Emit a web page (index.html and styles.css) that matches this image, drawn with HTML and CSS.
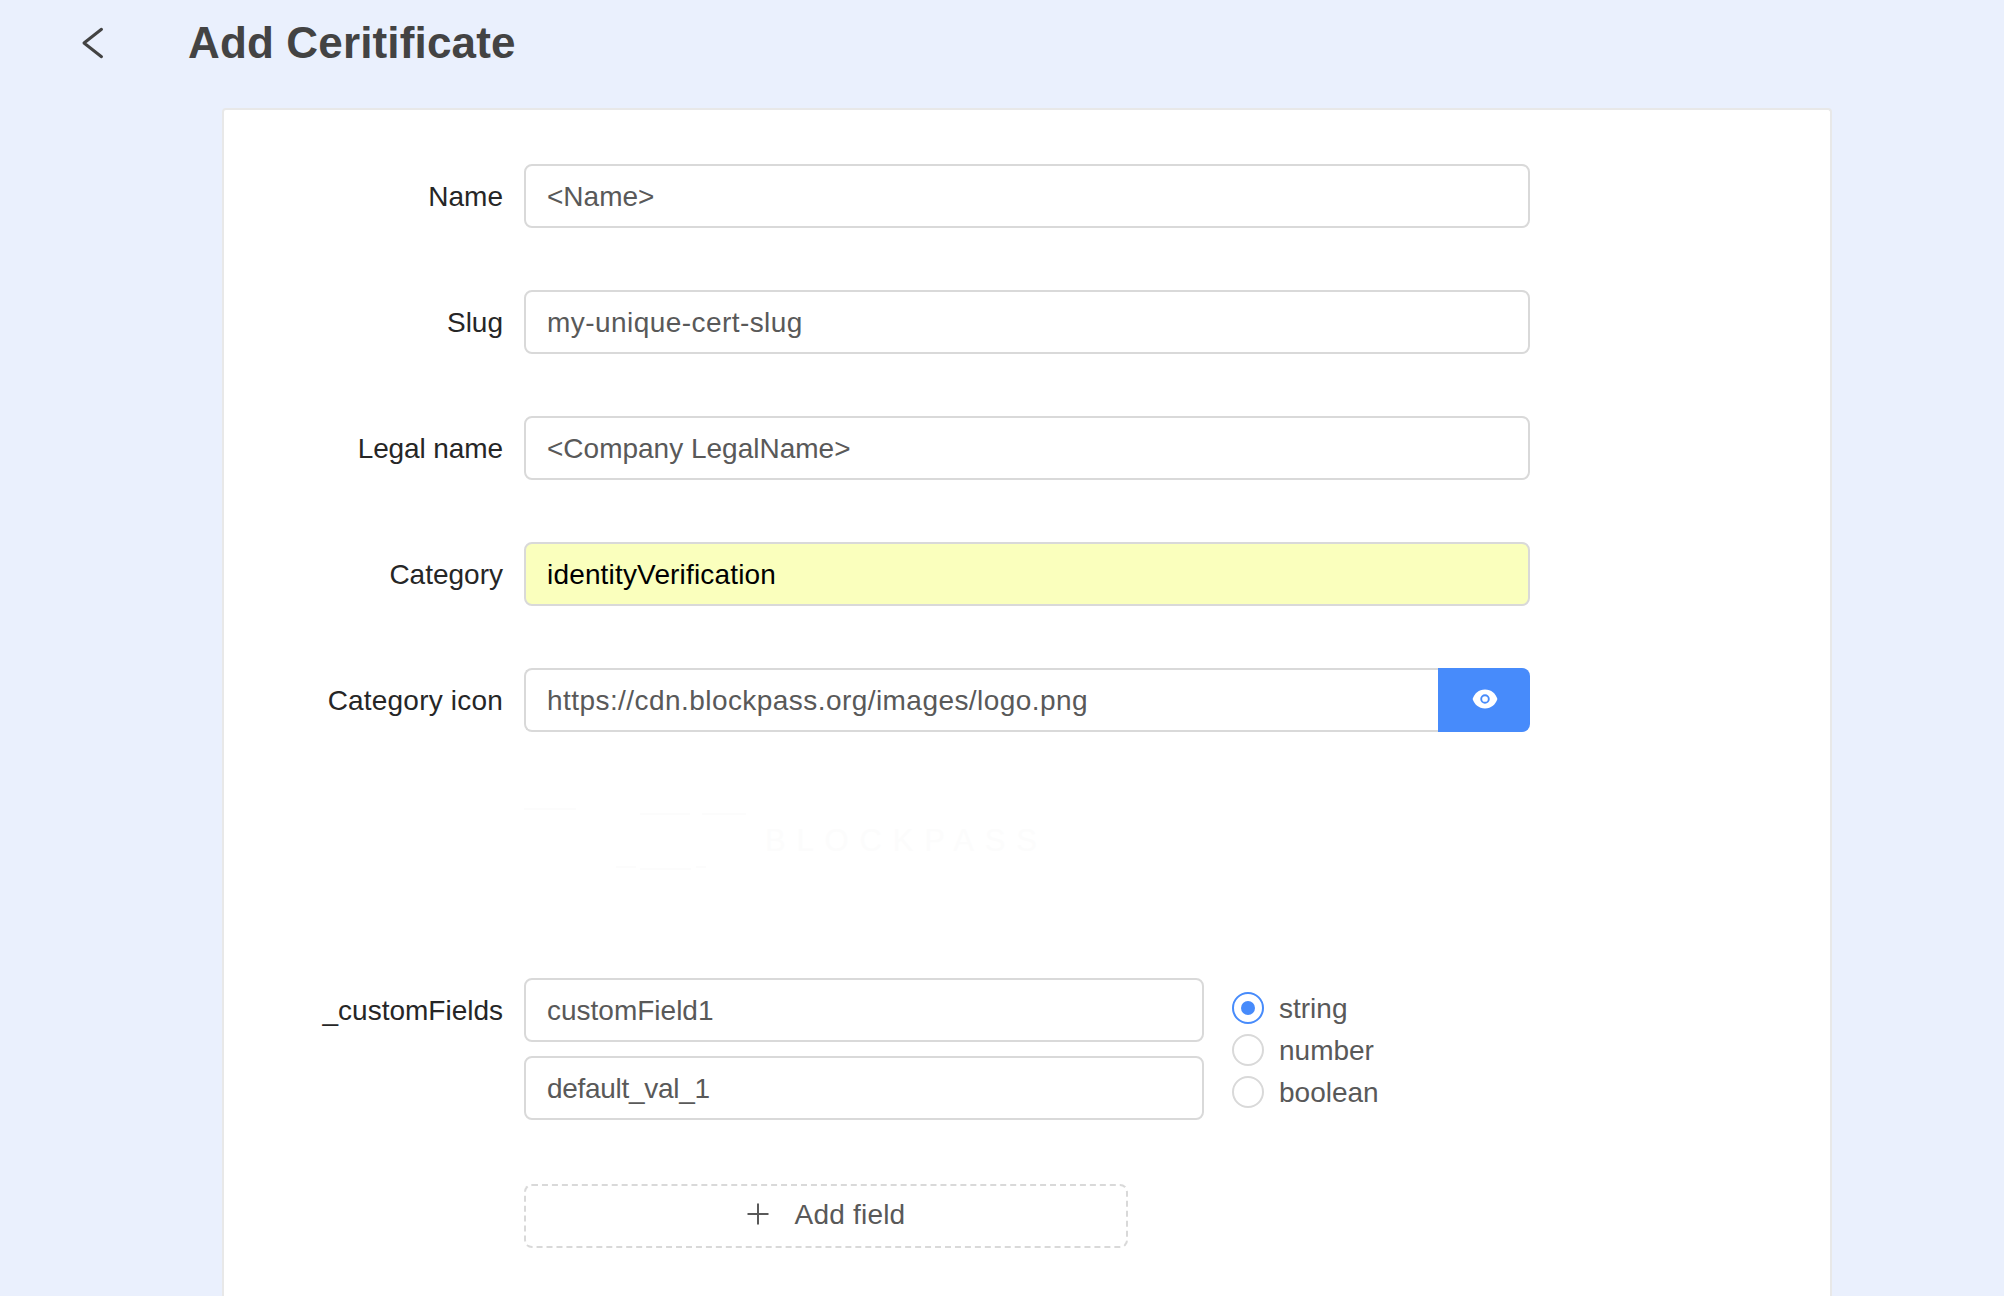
FILE: index.html
```html
<!DOCTYPE html>
<html lang="en">
<head>
<meta charset="utf-8">
<title>Add Ceritificate</title>
<link rel="stylesheet" href="styles.css">
</head>
<body>
<header class="header">
  <svg class="back" viewBox="0 0 24 34" width="24" height="34" aria-label="Back"><path d="M20.500 3.300 3 17 20.500 30.700" fill="none" stroke="currentColor" stroke-width="3" stroke-linecap="round" stroke-linejoin="round"/></svg>
  <h1 class="title">Add Ceritificate</h1>
</header>
<main class="card">
  <div class="row"><div class="label">Name</div><div class="input wide" role="textbox">&lt;Name&gt;</div></div>
  <div class="row"><div class="label">Slug</div><div class="input wide loose" role="textbox">my-unique-cert-slug</div></div>
  <div class="row"><div class="label snug">Legal name</div><div class="input wide" role="textbox">&lt;Company LegalName&gt;</div></div>
  <div class="row"><div class="label">Category</div><div class="input wide autofill" role="textbox">identityVerification</div></div>
  <div class="row icon-row"><div class="label airy">Category icon</div>
    <div class="group wide">
      <div class="input grouped loose" role="textbox">https://cdn.blockpass.org/images/logo.png</div>
      <button class="preview" aria-label="Preview"><svg viewBox="0 0 26 20" width="26" height="20"><path fill="#fff" d="M13 .5C6.500.5 2.600 4.500.6 10c2 5.500 5.900 9.400 12.400 9.400S23.400 15.500 25.400 10C23.400 4.500 19.500.5 13 .5Z"/><circle cx="13" cy="10" r="3.800" fill="#fff" stroke="#478bfb" stroke-width="1.900"/></svg></button>
    </div>
  </div>
  <div class="logo-row">
    <svg width="540" height="80" viewBox="0 0 540 80" aria-label="Blockpass">
      <path class="logo-mark" d="M0 9h52M92 67h20M116 69h51M172 67h10M116 14h50M178 14h44"/>
      <text class="logo-text" x="241" y="51" textLength="272">BLOCKPASS</text>
    </svg>
  </div>
  <div class="row custom-row"><div class="label">_customFields</div>
    <div class="stack">
      <div class="input" role="textbox">customField1</div>
      <div class="input tight" role="textbox">default_val_1</div>
    </div>
    <div class="radios">
      <div class="radio"><span class="dot checked"></span><span class="option">string</span></div>
      <div class="radio"><span class="dot"></span><span class="option">number</span></div>
      <div class="radio"><span class="dot"></span><span class="option">boolean</span></div>
    </div>
  </div>
  <button class="add"><svg viewBox="0 0 22 22" width="22" height="22"><path d="M11 .5v21M.5 11h21" stroke="currentColor" stroke-width="2"/></svg><span class="add-text">Add field</span></button>
</main>
</body>
</html>
```
FILE: styles.css
```css
* { box-sizing: border-box; }
body {
  margin: 0;
  height: 1296px;
  background: #eaf0fd;
  color: #595959;
  font: 28px/42px "Liberation Sans", Arial, sans-serif;
}
.header { height: 108px; padding-left: 81px; display: flex; align-items: flex-start; gap: 83px; color: #434343; }
.back { margin-top: 26px; }
.title { margin: 17px 0 0; font-size: 44px; line-height: 52px; font-weight: 700; letter-spacing: 0.15px; white-space: nowrap; }
.card {
  width: 1610px;
  height: 1188px;
  margin-left: 222px;
  padding-top: 54px;
  border: 2px solid #e8e8e8;
  border-bottom: 0;
  border-radius: 4px 4px 0 0;
  background: #fff;
}
.row { display: flex; margin-bottom: 62px; }
.label { width: 300px; height: 64px; padding-right: 21px; line-height: 66px; text-align: right; color: #262626; white-space: nowrap; }
.input {
  height: 64px;
  padding: 0 21px;
  border: 2px solid #d9d9d9;
  border-radius: 8px;
  line-height: 62px;
  white-space: nowrap;
  background: #fff;
}
.wide { width: 1006px; }
.loose { letter-spacing: 0.44px; }
.airy { letter-spacing: 0.2px; }
.snug { letter-spacing: -0.1px; }
.tight { letter-spacing: -0.3px; }
.autofill { background: #faffbd; color: #000; letter-spacing: 0.17px; }
.group { display: flex; }
.grouped { flex: 1; border-right: 0; border-radius: 8px 0 0 8px; }
.preview {
  width: 92px; height: 64px; padding: 0 0 2px 1px; border: 0;
  display: flex; align-items: center; justify-content: center;
  background: #478bfb; border-radius: 0 8px 8px 0;
}
.icon-row { margin-bottom: 0; }
.logo-row { height: 246px; padding: 68px 0 0 300px; }
.logo-row svg { display: block; }
.logo-mark { fill: none; stroke: #fcfcfc; stroke-width: 2; }
.logo-text { font-size: 31px; fill: #fcfcfc; }
.stack { width: 680px; display: flex; flex-direction: column; gap: 14px; }
.radios { padding: 9px 0 0 28px; }
.radio { display: flex; align-items: center; gap: 15px; height: 42px; }
.option { line-height: 40px; padding-top: 2px; }
.dot { width: 32px; height: 32px; border: 2px solid #d9d9d9; border-radius: 50%; display: flex; align-items: center; justify-content: center; }
.checked { border-color: #478bfb; }
.checked::after { content: ""; width: 14px; height: 14px; border-radius: 50%; background: #478bfb; }
.custom-row { margin-bottom: 64px; }
.add {
  margin-left: 300px; width: 604px; height: 64px; padding: 0 0 5px;
  display: flex; align-items: center; justify-content: center; gap: 26px;
  border: 2px dashed #d9d9d9; border-radius: 8px; background: #fff;
  color: #595959; font: inherit;
}
.add-text { line-height: 40px; padding-top: 3px; letter-spacing: 0.2px; }
```
